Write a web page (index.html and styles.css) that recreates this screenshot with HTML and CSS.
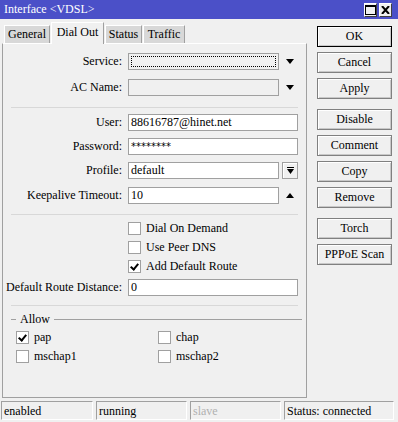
FILE: index.html
```html
<!DOCTYPE html>
<html lang="en">
<head>
    <meta charset="UTF-8">
    <title>Interface &lt;VDSL&gt;</title>
    <link rel="stylesheet" href="styles.css">
</head>
<body>

<div class="window">
    <div class="titlebar">
        <span class="title">Interface &lt;VDSL&gt;</span>
        <div class="title-buttons">
            <span class="tbtn">
                <svg width="11" height="10" viewBox="0 0 11 10"><rect x="0.5" y="0.5" width="10" height="9" fill="none" stroke="#000"/><rect x="0" y="0" width="11" height="2" fill="#000"/></svg>
            </span>
            <span class="tbtn">
                <svg width="9" height="8" viewBox="0 0 9 8"><path d="M1 0 L8 8 M8 0 L1 8" stroke="#000" stroke-width="2"/></svg>
            </span>
        </div>
    </div>

    <div class="main">
        <div class="left">
            <div class="tabs">
                <div class="tab tab-general">General</div>
                <div class="tab active tab-dialout">Dial Out</div>
                <div class="tab tab-status">Status</div>
                <div class="tab tab-traffic">Traffic</div>
            </div>

            <div class="panel">
                <!-- Service / AC name -->
                <div class="row first">
                    <span class="label">Service:</span>
                    <div class="field select focused"><span class="focus-rect"></span></div>
                    <span class="arrow down"></span>
                </div>
                <div class="row gap9">
                    <span class="label">AC Name:</span>
                    <div class="field select"></div>
                    <span class="arrow down"></span>
                </div>

                <div class="sep"></div>

                <div class="row gap6">
                    <span class="label">User:</span>
                    <div class="field wide">88616787@hinet.net</div>
                </div>
                <div class="row gap7">
                    <span class="label">Password:</span>
                    <div class="field wide pass">********</div>
                </div>
                <div class="row gap7">
                    <span class="label">Profile:</span>
                    <div class="field">default</div>
                    <span class="dropbtn">
                        <svg width="7" height="8" viewBox="0 0 7 8"><rect x="0" y="0" width="7" height="1" fill="#000"/><path d="M0 2 H7 L3.5 7 Z" fill="#000"/></svg>
                    </span>
                </div>
                <div class="row gap8">
                    <span class="label">Keepalive Timeout:</span>
                    <div class="field">10</div>
                    <span class="arrow up"></span>
                </div>

                <div class="sep sep-low"></div>

                <div class="checks">
                    <label class="check"><span class="box"></span>Dial On Demand</label>
                    <label class="check"><span class="box"></span>Use Peer DNS</label>
                    <label class="check"><span class="box checked"></span>Add Default Route</label>
                </div>

                <div class="row gap3">
                    <span class="label">Default Route Distance:</span>
                    <div class="field wide">0</div>
                </div>

                <div class="sep sep-dist"></div>

                <div class="group">
                    <div class="legend"><span class="legend-line short"></span><span class="legend-text">Allow</span><span class="legend-line"></span></div>
                    <div class="allow-grid">
                        <label class="check"><span class="box checked"></span>pap</label>
                        <label class="check"><span class="box"></span>chap</label>
                        <label class="check"><span class="box"></span>mschap1</label>
                        <label class="check"><span class="box"></span>mschap2</label>
                    </div>
                </div>
            </div>
        </div>

        <div class="side">
            <button class="btn default">OK</button>
            <button class="btn">Cancel</button>
            <button class="btn">Apply</button>
            <button class="btn group-start">Disable</button>
            <button class="btn">Comment</button>
            <button class="btn">Copy</button>
            <button class="btn">Remove</button>
            <button class="btn group-start">Torch</button>
            <button class="btn">PPPoE Scan</button>
        </div>
    </div>

    <div class="statusbar">
        <div class="cell c1">enabled</div>
        <div class="cell c2">running</div>
        <div class="cell c3 dim">slave</div>
        <div class="cell c4">Status: connected</div>
    </div>
</div>

</body>
</html>
```

FILE: styles.css
```css
body {
    margin: 0;
    background-color: #f0f0f0;
    font-family: "Liberation Serif", "Liberation Sans", sans-serif;
    font-size: 12px;
    color: #000;
}
.window {
    width: 398px;
    height: 422px;
    display: flex;
    flex-direction: column;
    overflow: hidden;
}
/* Title bar */
.titlebar {
    height: 19px;
    background-color: #4b50c8;
    display: flex;
    align-items: center;
    justify-content: space-between;
    flex-shrink: 0;
}
.title {
    color: #fff;
    padding-left: 4px;
}
.title-buttons {
    display: flex;
    gap: 2px;
    padding-right: 6px;
}
.tbtn {
    width: 13px;
    height: 14px;
    background-color: #f0f0f0;
    border: 1px solid #fff;
    border-right-color: #404040;
    border-bottom-color: #404040;
    box-sizing: border-box;
    display: flex;
    align-items: center;
    justify-content: center;
}
/* Main */
.main {
    display: flex;
    height: 382px;
}
.left {
    width: 307px;
    padding-left: 2px;
    box-sizing: border-box;
}
.tabs {
    display: flex;
    align-items: flex-end;
    height: 24px;
    padding-left: 2px;
}
.tab {
    height: 18px;
    line-height: 17px;
    padding: 0;
    margin-right: 1px;
    background-color: #d8d8d8;
    border: 1px solid #fff;
    border-bottom: none;
    border-right-color: #a0a0a0;
    text-align: center;
    box-sizing: border-box;
    white-space: nowrap;
}
.tab-general { width: 46px; }
.tab-dialout { width: 53px; }
.tab-status { width: 37px; }
.tab-traffic { width: 42px; }
.tab.active {
    height: 22px;
    line-height: 19px;
    background-color: #f0f0f0;
    margin-bottom: -1px;
    position: relative;
}
.panel {
    height: 355px;
    border: 1px solid #a0a0a0;
    border-top-color: #fff;
    box-sizing: border-box;
    display: flex;
    flex-direction: column;
}
.row {
    display: flex;
    align-items: center;
    height: 17px;
}
.row.first { margin-top: 9px; }
.gap3 { margin-top: 3px; }
.gap6 { margin-top: 6px; }
.gap7 { margin-top: 7px; }
.gap8 { margin-top: 8px; }
.gap9 { margin-top: 9px; }
.label {
    width: 119px;
    margin-right: 6px;
    text-align: right;
    white-space: nowrap;
}
.field {
    width: 151px;
    height: 17px;
    line-height: 15px;
    border: 1px solid #a0a0a0;
    background-color: #fff;
    box-sizing: border-box;
    padding-left: 2px;
    white-space: nowrap;
    overflow: hidden;
}
.field.wide { width: 170px; }
.field.pass { font-family: "DejaVu Sans", sans-serif; font-size: 10px; }
.field.select {
    background-color: #f0f0f0;
    padding: 2px;
}
.focus-rect {
    display: block;
    height: 100%;
    border: 1px dotted #000;
    box-sizing: border-box;
}
.arrow {
    width: 0;
    height: 0;
    margin-left: 7px;
    border-left: 4px solid transparent;
    border-right: 4px solid transparent;
}
.arrow.down { border-top: 5px solid #000; }
.arrow.up { border-bottom: 5px solid #000; }
.dropbtn {
    width: 16px;
    height: 17px;
    margin-left: 3px;
    border: 1px solid #a0a0a0;
    box-shadow: inset 1px 1px #fff;
    box-sizing: border-box;
    display: flex;
    align-items: center;
    justify-content: center;
}
.sep {
    height: 1px;
    width: 287px;
    margin-left: 8px;
    margin-top: 11px;
    background-color: #d8d8d8;
}
.sep-low { margin-top: 10px; }
.sep-dist { margin-top: 9px; }
.checks {
    display: flex;
    flex-direction: column;
    margin-top: 4px;
    padding-left: 125px;
}
.check {
    display: flex;
    align-items: center;
    height: 19px;
    white-space: nowrap;
}
.box {
    width: 13px;
    height: 13px;
    border: 1px solid #a0a0a0;
    background-color: #fff;
    box-sizing: border-box;
    margin-right: 5px;
    position: relative;
}
.box.checked::after {
    content: "";
    position: absolute;
    left: 3px;
    top: 1px;
    width: 3px;
    height: 6px;
    border-right: 2px solid #000;
    border-bottom: 2px solid #000;
    transform: rotate(40deg);
}
/* Allow group */
.group {
    margin-top: 6px;
}
.legend {
    display: flex;
    align-items: center;
    height: 14px;
    padding-left: 8px;
}
.legend-line {
    height: 1px;
    width: 248px;
    background-color: #a0a0a0;
}
.legend-line.short { width: 5px; }
.legend-text { padding: 0 4px; }
.allow-grid {
    display: grid;
    grid-template-columns: 142px 100px;
    margin-top: 2px;
    padding-left: 13px;
}
/* Side buttons */
.side {
    display: flex;
    flex-direction: column;
    padding-left: 10px;
    padding-top: 7px;
    gap: 5px;
}
.btn {
    width: 75px;
    height: 21px;
    padding: 0;
    margin: 0;
    font-family: inherit;
    font-size: 12px;
    color: #000;
    background-color: #f0f0f0;
    border: 1px solid #808080;
    box-shadow: inset 1px 1px #fff, inset -1px -1px #c8c8c8;
}
.btn.default {
    border-color: #000;
}
.btn.group-start { margin-top: 5px; }
/* Status bar */
.statusbar {
    display: flex;
    gap: 3px;
    height: 21px;
    padding-left: 1px;
    align-items: flex-start;
}
.cell {
    height: 19px;
    line-height: 18px;
    border: 1px solid #a0a0a0;
    border-right-color: #fff;
    border-bottom-color: #fff;
    box-sizing: border-box;
    padding-left: 2px;
    white-space: nowrap;
}
.c1 { width: 92px; }
.c2 { width: 91px; }
.c3 { width: 91px; }
.c4 { width: 110px; }
.dim { color: #b0b0b0; }
```
